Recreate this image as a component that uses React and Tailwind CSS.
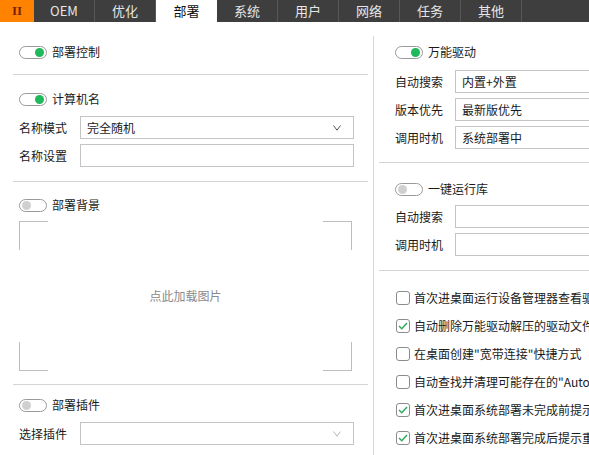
import React from "react";

const font = { fontFamily: '"Noto Sans CJK SC", "Microsoft YaHei", sans-serif' };

function Toggle({ on, label }) {
  return (
    <div className="flex items-center h-[16px]">
      <div className="w-[28px] h-[13px] rounded-full border border-[#9a9a9a] bg-white flex items-center px-[2px]" style={{ justifyContent: on ? "flex-end" : "flex-start" }}>
        <div className={on ? "w-[9px] h-[9px] rounded-full bg-[#1fb85a]" : "w-[9px] h-[9px] rounded-full bg-[#d0d0d0]"} />
      </div>
      <span className="ml-[5px] text-[12px] text-[#1a1a1a] leading-none">{label}</span>
    </div>
  );
}

function Chevron({ light }) {
  return (
    <svg width="8" height="6" viewBox="0 0 8 6" className="shrink-0">
      <path d="M0.5 0.5 L4 5.2 L7.5 0.5" fill="none" stroke={light ? "#b8b8b8" : "#555"} strokeWidth="1" />
    </svg>
  );
}

function Field({ label, value, select, light, labelW, inputW }) {
  return (
    <div className="flex items-center h-[23px]">
      <span className={`${labelW} shrink-0 text-[12px] text-[#1a1a1a]`}>{label}</span>
      <div className={`${inputW} shrink-0 h-[23px] border border-[#c4c4c4] bg-white flex items-center pl-[6px] pr-[12px]`}>
        <span className="flex-1 text-[12px] text-[#1a1a1a] whitespace-nowrap">{value}</span>
        {select && <Chevron light={light} />}
      </div>
    </div>
  );
}

function Check({ on, label }) {
  return (
    <div className="flex items-center h-[16px] whitespace-nowrap">
      <div className="w-[14px] h-[14px] shrink-0 rounded-[3px] border border-[#8c8c8c] bg-white flex items-center justify-center">
        {on && (
          <svg width="10" height="8" viewBox="0 0 10 8">
            <path d="M1 4 L3.8 6.8 L9 1" fill="none" stroke="#2aa85a" strokeWidth="1.4" />
          </svg>
        )}
      </div>
      <span className="ml-[4px] text-[12px] text-[#1a1a1a]">{label}</span>
    </div>
  );
}

const tabs = ["OEM", "优化", "部署", "系统", "用户", "网络", "任务", "其他"];

export default function App() {
  return (
    <div className="w-[589px] h-[455px] overflow-hidden bg-white flex flex-col" style={font}>
      <div className="h-[22px] shrink-0 bg-[#3e3e3e] flex">
        <div className="w-[34px] h-full bg-[#ff8200] flex items-center justify-center text-[13px] font-bold text-[#7a1f00]" style={{ fontFamily: '"Liberation Serif", serif' }}>II</div>
        {tabs.map((t) => (
          <div
            key={t}
            className={
              t === "部署"
                ? "w-[61px] h-full bg-white text-[#111] text-[13px] flex items-center justify-center"
                : "w-[61px] h-full border-r border-[#575757] text-[#e6e6e6] text-[13px] flex items-center justify-center"
            }
          >
            {t}
          </div>
        ))}
      </div>
      <div className="flex flex-1 min-h-0">
        {/* left column */}
        <div className="w-[373px] shrink-0 pl-[13px] pr-[5px] flex flex-col">
          <div className="px-[6px] pt-[22px] pb-[14px]">
            <Toggle on label="部署控制" />
          </div>
          <div className="h-px bg-[#d4d4d4]" />
          <div className="px-[6px] pt-[16px] pb-[14px] flex flex-col">
            <Toggle on label="计算机名" />
            <div className="mt-[9px] flex flex-col gap-[5px]">
              <Field label="名称模式" value="完全随机" select labelW="w-[61px]" inputW="w-[274px]" />
              <Field label="名称设置" value="" labelW="w-[61px]" inputW="w-[274px]" />
            </div>
          </div>
          <div className="h-px bg-[#d4d4d4]" />
          <div className="px-[6px] pt-[15px] pb-[13px] flex flex-col">
            <Toggle label="部署背景" />
            <div className="relative mt-[8px] w-[333px] h-[150px] flex items-center justify-center">
              <div className="absolute left-0 top-0 w-[29px] h-[29px] border-l border-t border-[#bdbdbd]" />
              <div className="absolute right-0 top-0 w-[29px] h-[29px] border-r border-t border-[#bdbdbd]" />
              <div className="absolute left-0 bottom-0 w-[29px] h-[29px] border-l border-b border-[#bdbdbd]" />
              <div className="absolute right-0 bottom-0 w-[29px] h-[29px] border-r border-b border-[#bdbdbd]" />
              <span className="text-[12px] text-[#8a8a8a]">点此加载图片</span>
            </div>
          </div>
          <div className="h-px bg-[#d4d4d4]" />
          <div className="px-[6px] pt-[12px] flex flex-col">
            <Toggle label="部署插件" />
            <div className="mt-[9px]">
              <Field label="选择插件" value="" select light labelW="w-[61px]" inputW="w-[274px]" />
            </div>
          </div>
        </div>
        {/* vertical divider */}
        <div className="w-px bg-[#d8d8d8] mt-[14px]" />
        {/* right column */}
        <div className="flex-1 min-w-0 pl-[5px] flex flex-col">
          <div className="pl-[16px] pt-[22px] pb-[13px] flex flex-col">
            <Toggle on label="万能驱动" />
            <div className="mt-[10px] flex flex-col gap-[5px]">
              <Field label="自动搜索" value="内置+外置" labelW="w-[60px]" inputW="w-[220px]" />
              <Field label="版本优先" value="最新版优先" labelW="w-[60px]" inputW="w-[220px]" />
              <Field label="调用时机" value="系统部署中" labelW="w-[60px]" inputW="w-[220px]" />
            </div>
          </div>
          <div className="h-px bg-[#d4d4d4]" />
          <div className="pl-[16px] pt-[18px] pb-[14px] flex flex-col">
            <Toggle label="一键运行库" />
            <div className="mt-[8px] flex flex-col gap-[5px]">
              <Field label="自动搜索" value="" labelW="w-[60px]" inputW="w-[220px]" />
              <Field label="调用时机" value="" labelW="w-[60px]" inputW="w-[220px]" />
            </div>
          </div>
          <div className="h-px bg-[#d4d4d4]" />
          <div className="pl-[17px] pt-[19px] flex flex-col gap-[12px]">
            <Check label="首次进桌面运行设备管理器查看驱动" />
            <Check on label="自动删除万能驱动解压的驱动文件" />
            <Check label={'在桌面创建"宽带连接"快捷方式'} />
            <Check label={'自动查找并清理可能存在的"Autorun"'} />
            <Check on label="首次进桌面系统部署未完成前提示" />
            <Check on label="首次进桌面系统部署完成后提示重启" />
          </div>
        </div>
      </div>
    </div>
  );
}
